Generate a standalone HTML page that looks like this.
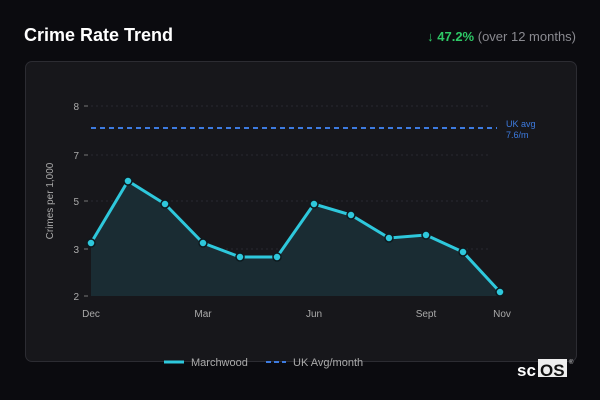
<!DOCTYPE html>
<html><head><style>
body{margin:0;width:600px;height:400px;background:#0b0b0f;font-family:"Liberation Sans",sans-serif;position:relative;overflow:hidden}
.t{position:absolute;left:24px;top:25px;color:#fff;font-size:18px;font-weight:bold}
.r{position:absolute;right:24px;top:29px;font-size:13px;color:#8a8a90}
.r b{color:#2ec866}
.card{position:absolute;left:25px;top:61px;width:550px;height:299px;background:#17171b;border:1px solid #2c2c32;border-radius:7px}
svg{position:absolute;left:0;top:0}
</style></head><body>
<div class="t">Crime Rate Trend</div>
<div class="r"><b>↓ 47.2%</b> (over 12 months)</div>
<div class="card"></div>
<svg width="600" height="400" font-family="Liberation Sans, sans-serif">
<g stroke="#2a2a30" stroke-dasharray="2,3"><line x1="91" y1="106" x2="490" y2="106"/><line x1="91" y1="155" x2="490" y2="155"/><line x1="91" y1="201" x2="490" y2="201"/><line x1="91" y1="249" x2="490" y2="249"/></g>
<g fill="#aaa" font-size="10" text-anchor="end"><text x="79" y="110">8</text><text x="79" y="159">7</text><text x="79" y="205">5</text><text x="79" y="253">3</text><text x="79" y="300">2</text></g>
<g stroke="#777"><line x1="84" y1="106" x2="88" y2="106"/><line x1="84" y1="155" x2="88" y2="155"/><line x1="84" y1="201" x2="88" y2="201"/><line x1="84" y1="249" x2="88" y2="249"/><line x1="84" y1="296" x2="88" y2="296"/></g>
<text x="53" y="201" fill="#aaa" font-size="10" text-anchor="middle" transform="rotate(-90 53 201)">Crimes per 1,000</text>
<path d="M91,243 L128,181 165,204 203,243 240,257 277,257 314,204 351,215 389,238 426,235 463,252 500,292 L500,296 L91,296Z" fill="#1a2c33"/>
<line x1="91" y1="128" x2="497" y2="128" stroke="#3d7be0" stroke-width="2" stroke-dasharray="5,4"/>
<text x="506" y="127" fill="#3d7be0" font-size="9">UK avg</text><text x="506" y="138" fill="#3d7be0" font-size="9">7.6/m</text>
<polyline points="91,243 128,181 165,204 203,243 240,257 277,257 314,204 351,215 389,238 426,235 463,252 500,292" fill="none" stroke="#2ec8dc" stroke-width="3"/>
<g fill="#2ec8dc" stroke="#0e1a1f" stroke-width="1.5">
<circle cx="91" cy="243" r="4"/><circle cx="128" cy="181" r="4"/><circle cx="165" cy="204" r="4"/><circle cx="203" cy="243" r="4"/><circle cx="240" cy="257" r="4"/><circle cx="277" cy="257" r="4"/><circle cx="314" cy="204" r="4"/><circle cx="351" cy="215" r="4"/><circle cx="389" cy="238" r="4"/><circle cx="426" cy="235" r="4"/><circle cx="463" cy="252" r="4"/><circle cx="500" cy="292" r="4"/></g>
<g fill="#aaa" font-size="10" text-anchor="middle"><text x="91" y="317">Dec</text><text x="203" y="317">Mar</text><text x="314" y="317">Jun</text><text x="426" y="317">Sept</text><text x="502" y="317">Nov</text></g>
<line x1="164" y1="362" x2="184" y2="362" stroke="#2ec8dc" stroke-width="3"/>
<text x="191" y="366" fill="#aaa" font-size="11">Marchwood</text>
<line x1="266" y1="362" x2="286" y2="362" stroke="#3d7be0" stroke-width="2" stroke-dasharray="5,3"/>
<text x="293" y="366" fill="#aaa" font-size="11">UK Avg/month</text>
<text x="517" y="376" fill="#fff" font-size="17" font-weight="bold">sc</text>
<rect x="538" y="359" width="29" height="18" fill="#eee"/>
<text x="540" y="376" fill="#111" font-size="17" font-weight="bold">OS</text>
<text x="569" y="364" fill="#ccc" font-size="6">®</text>
</svg>
</body></html>
